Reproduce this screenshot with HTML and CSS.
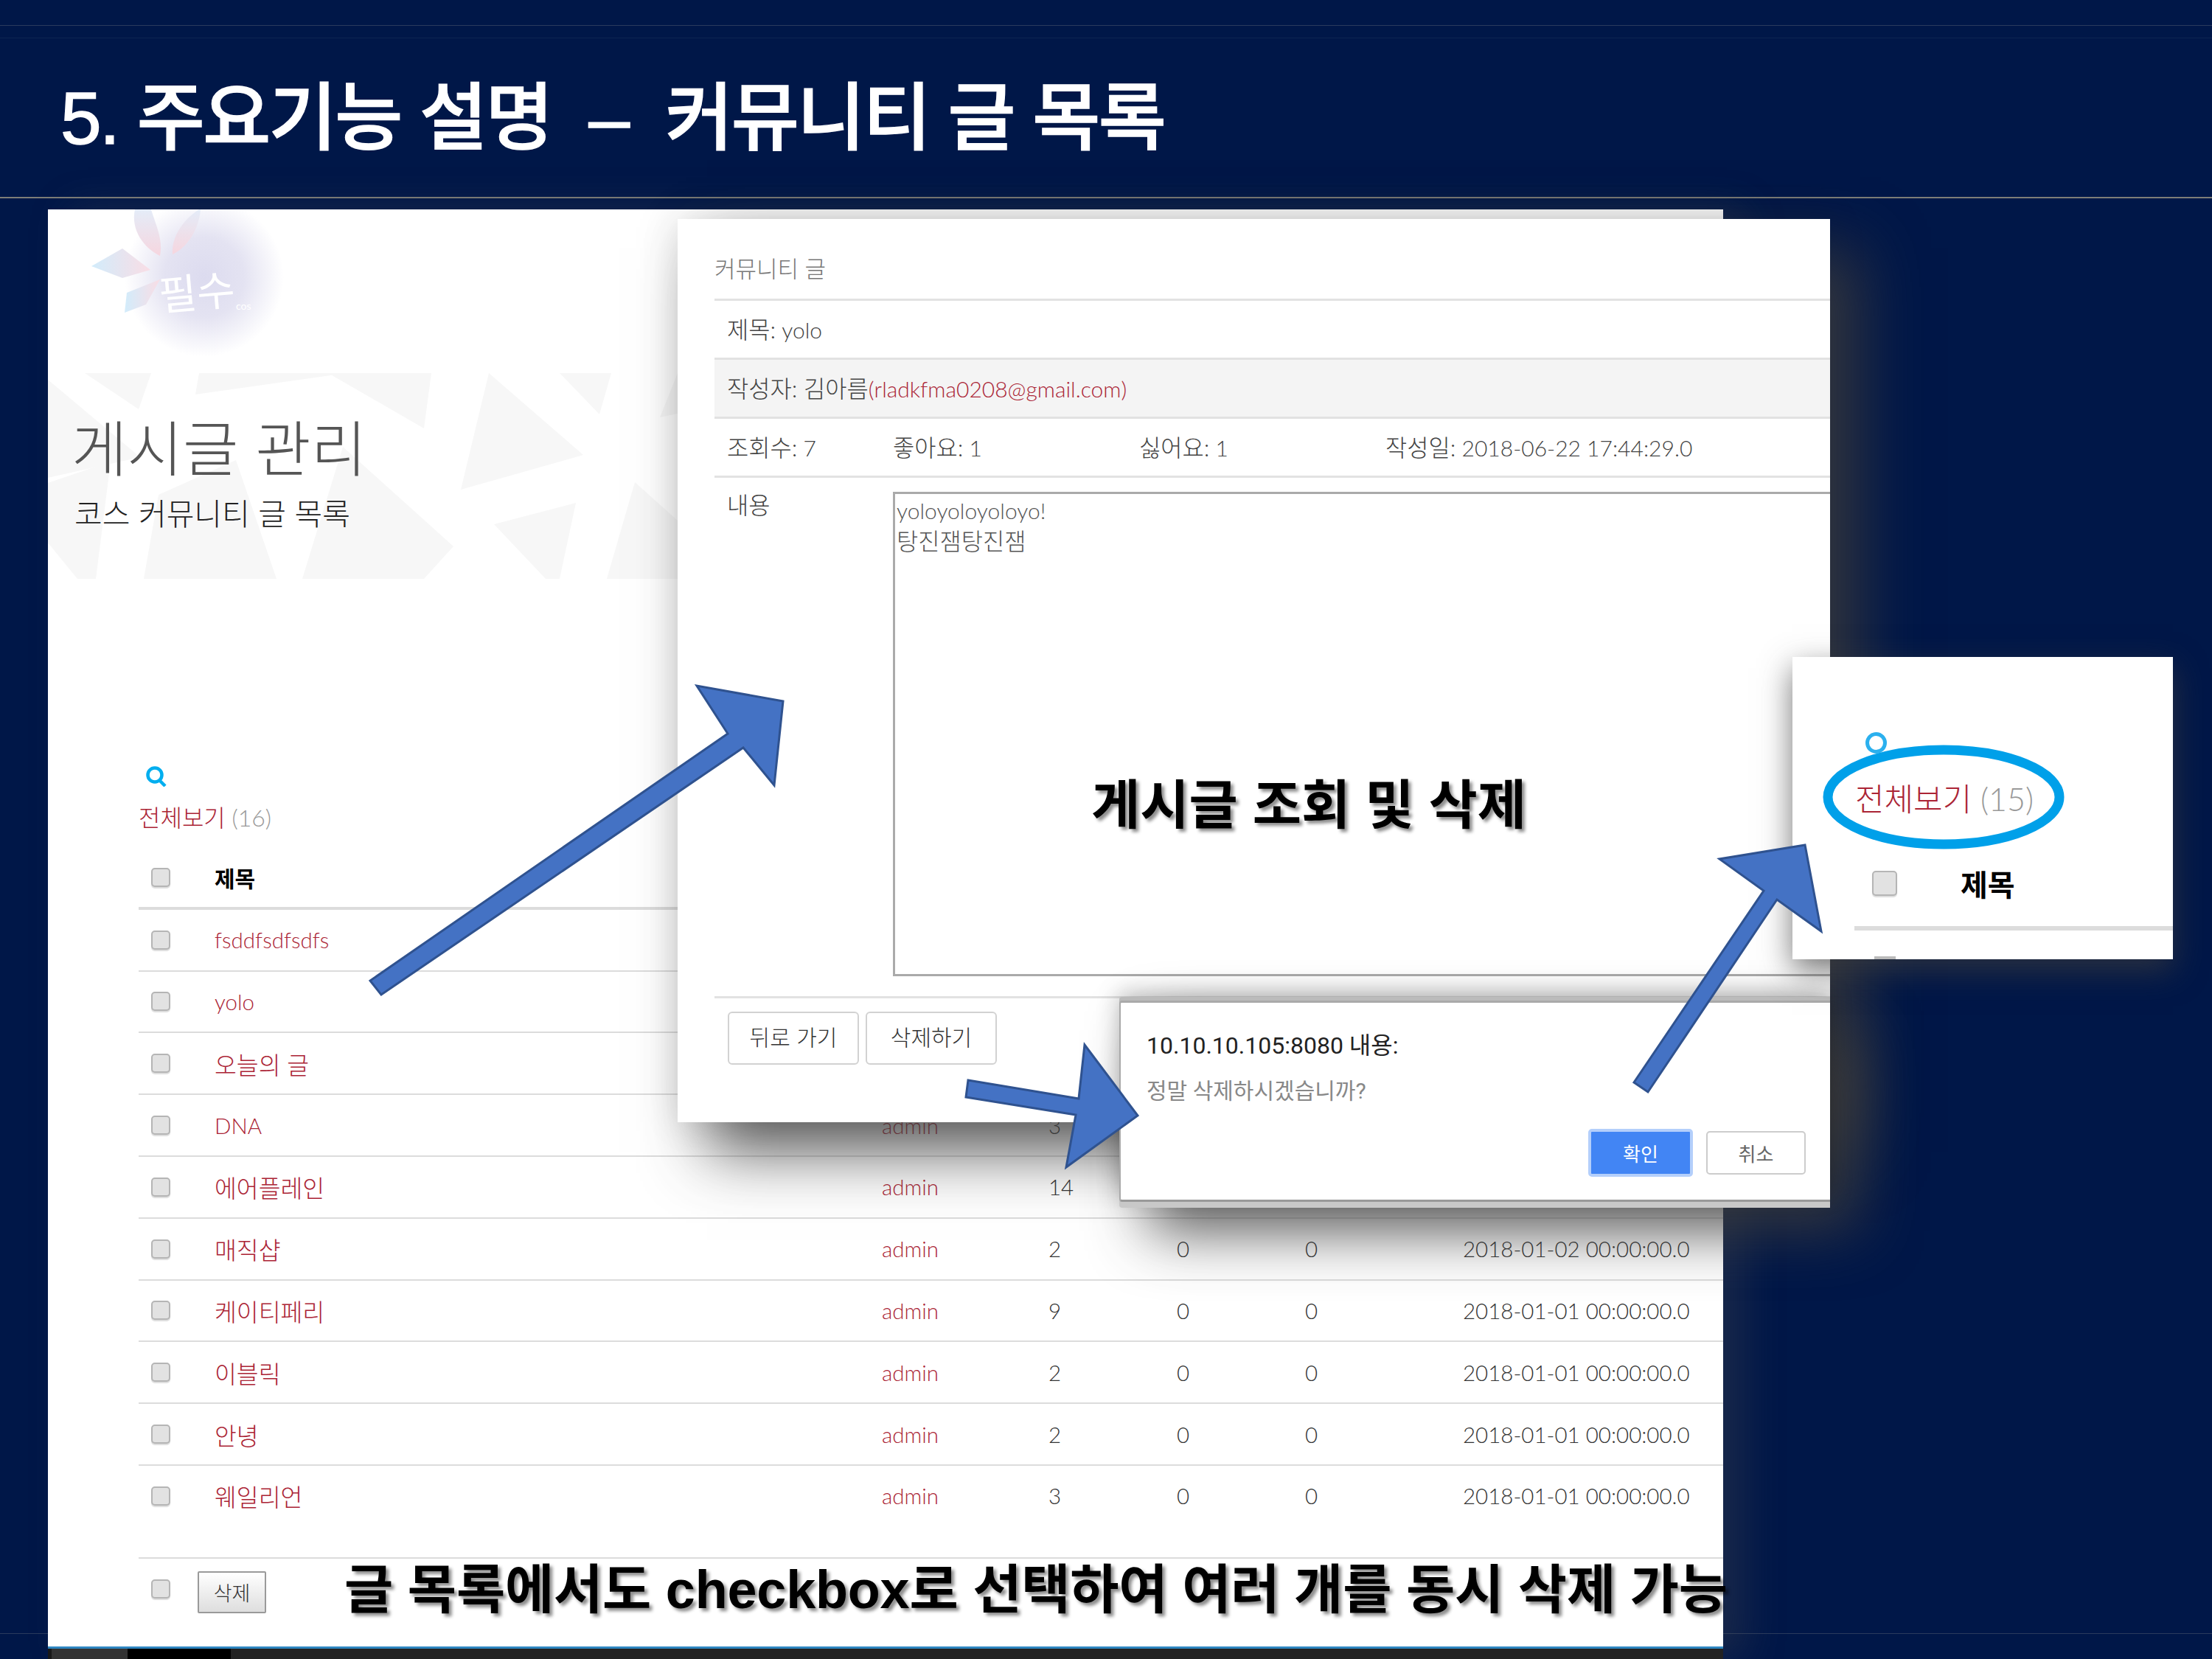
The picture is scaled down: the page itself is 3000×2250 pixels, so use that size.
FILE: index.html
```html
<!DOCTYPE html>
<html lang="ko">
<head>
<meta charset="utf-8">
<title>커뮤니티 글 목록</title>
<link rel="stylesheet" href="styles.css">
</head>
<body>
<div class="slide">
  <div class="topline-a"></div>
  <div class="topline-b"></div>
  <header class="slide-head"><h1>5. 주요기능 설명 &nbsp;–&nbsp; 커뮤니티 글 목록</h1></header>
  <div class="footline"></div>

  <section class="page">
    <div class="logo">
      <svg class="logo-art" viewBox="0 0 320 222" width="320" height="222">
        <defs>
          <radialGradient id="halo"><stop offset="0" stop-color="#dcdbef"/><stop offset=".5" stop-color="#e4e3f2"/><stop offset="1" stop-color="#ffffff"/></radialGradient>
          <linearGradient id="pet1" x1="0" y1="0" x2="0" y2="1"><stop offset="0" stop-color="#e4ecf8"/><stop offset="1" stop-color="#f6d6df"/></linearGradient>
          <linearGradient id="pet2" x1="0" y1="0" x2="1" y2="0"><stop offset="0" stop-color="#d2ecfb"/><stop offset="1" stop-color="#f9dde5"/></linearGradient>
        </defs>
        <circle cx="212" cy="92" r="108" fill="url(#halo)"/>
        <path d="M118 0C112 28 130 52 152 63C157 41 145 18 140 0Z" fill="url(#pet1)"/>
        <path d="M205 0C180 16 167 41 169 61C190 51 205 26 207 0Z" fill="url(#pet1)"/>
        <path d="M59 77L101 53L139 82L101 93Z" fill="url(#pet2)"/>
        <path d="M104 140L107 113L152 95L133 129Z" fill="url(#pet2)"/>
      </svg>
      <span class="logo-name">필수</span>
      <span class="logo-sub">cos</span>
    </div>
    <div class="hero">
      <svg class="hero-art" viewBox="0 0 854 279" width="854" height="279">
        <g fill="#f7f7f7">
          <polygon points="0,9 125,114 0,142"/>
          <polygon points="50,0 140,0 123,49"/>
          <polygon points="205,0 405,0 200,29"/>
          <polygon points="0,149 85,120 65,279 40,279 0,230"/>
          <polygon points="130,279 150,165 255,118 310,279"/>
          <polygon points="345,279 400,100 550,235 510,279"/>
          <polygon points="380,0 520,0 510,75"/>
          <polygon points="598,0 726,111 560,158"/>
          <polygon points="694,0 764,0 748,56"/>
          <polygon points="605,205 716,176 694,279 675,279"/>
          <polygon points="758,279 796,148 854,200 854,279"/>
          <polygon points="830,60 854,0 854,55"/>
        </g>
      </svg>
      <div class="hero-text">
        <h2>게시글 관리</h2>
        <p>코스 커뮤니티 글 목록</p>
      </div>
    </div>
    <div class="board">
      <svg class="search" viewBox="0 0 30 28" width="30" height="28"><circle cx="13" cy="12" r="9.5" fill="none" stroke="#00aeef" stroke-width="4.5"/><path d="M19 19l8 8" stroke="#00aeef" stroke-width="4.5" fill="none"/></svg>
      <div class="count"><a class="link">전체보기</a> <span class="num">(16)</span></div>
      <div class="row head"><span class="check"></span><b>제목</b></div>
      <div class="row"><span class="check"></span><a class="link">fsddfsdfsdfs</a></div>
      <div class="row"><span class="check"></span><a class="link">yolo</a></div>
      <div class="row"><span class="check"></span><a class="link ko">오늘의 글</a></div>
      <div class="row"><span class="check"></span><a class="link">DNA</a><a class="link">admin</a><span>3</span></div>
      <div class="row"><span class="check"></span><a class="link ko">에어플레인</a><a class="link">admin</a><span>14</span></div>
      <div class="row"><span class="check"></span><a class="link ko">매직샵</a><a class="link">admin</a><span>2</span><span>0</span><span>0</span><span>2018-01-02 00:00:00.0</span></div>
      <div class="row"><span class="check"></span><a class="link ko">케이티페리</a><a class="link">admin</a><span>9</span><span>0</span><span>0</span><span>2018-01-01 00:00:00.0</span></div>
      <div class="row"><span class="check"></span><a class="link ko">이블릭</a><a class="link">admin</a><span>2</span><span>0</span><span>0</span><span>2018-01-01 00:00:00.0</span></div>
      <div class="row"><span class="check"></span><a class="link ko">안녕</a><a class="link">admin</a><span>2</span><span>0</span><span>0</span><span>2018-01-01 00:00:00.0</span></div>
      <div class="row last"><span class="check"></span><a class="link ko">웨일리언</a><a class="link">admin</a><span>3</span><span>0</span><span>0</span><span>2018-01-01 00:00:00.0</span></div>
      <div class="foot"><span class="check"></span><button class="del">삭제</button></div>
    </div>
    <div class="taskbar"><i class="seg-a"></i><i class="seg-b"></i><i class="seg-c"></i></div>
  </section>

  <section class="modal">
    <div class="m-inner">
      <div class="m-title">커뮤니티 글</div>
      <div class="m-row"><span class="ko">제목:</span> yolo</div>
      <div class="m-row alt"><span class="ko">작성자: 김아름</span><a class="link">(rladkfma0208@gmail.com)</a></div>
      <div class="m-row stats"><span><span class="ko">조회수:</span> 7</span><span><span class="ko">좋아요:</span> 1</span><span><span class="ko">싫어요:</span> 1</span><span><span class="ko">작성일:</span> 2018-06-22 17:44:29.0</span></div>
      <div class="m-body">
        <span class="m-label ko">내용</span>
        <div class="m-area">yoloyoloyoloyo!<br><span class="ko">탕진잼탕진잼</span></div>
      </div>
      <div class="m-actions"><button class="m-btn">뒤로 가기</button><button class="m-btn">삭제하기</button></div>
    </div>
  </section>

  <section class="dialog">
    <div class="d-host">10.10.10.105:8080 내용:</div>
    <div class="d-msg">정말 삭제하시겠습니까?</div>
    <div class="d-actions"><button class="d-ok">확인</button><button class="d-no">취소</button></div>
  </section>

  <section class="zoomcard">
    <div class="z-clip">
      <div class="z-ring"></div>
      <div class="z-count"><a class="link">전체보기</a> <span class="num">(15)</span></div>
      <div class="z-head"><span class="check big"></span><b>제목</b></div>
      <span class="z-stub"></span>
    </div>
  </section>
  <svg class="ellipse" viewBox="0 0 340 150" width="340" height="150"><ellipse cx="170" cy="75" rx="157" ry="64" fill="none" stroke="#00a0e9" stroke-width="13"/></svg>

  <svg class="arrows" viewBox="0 0 3000 2250" width="3000" height="2250">
    <g fill="#4472c4" stroke="#2f528f" stroke-width="3" stroke-linejoin="miter">
      <polygon points="502,1330 517,1349 1008,1014 1050,1065 1062,951 945,930 987,995"/>
      <polygon points="1313,1465 1310,1488 1459,1512 1446,1583 1543,1513 1471,1417 1463,1490"/>
      <polygon points="2216,1468 2235,1481 2410,1220 2470,1263 2448,1146 2332,1165 2392,1208"/>
    </g>
  </svg>

  <div class="note note-a">게시글 조회 및 삭제</div>
  <div class="note note-b">글 목록에서도 checkbox로 선택하여 여러 개를 동시 삭제 가능</div>
</div>
</body>
</html>
```
FILE: styles.css
```css
* { box-sizing: border-box; }
html, body { margin: 0; padding: 0; }
body { width: 3000px; height: 2250px; overflow: hidden; }
h1, h2, p { margin: 0; }
button { font: inherit; }

.slide {
  position: relative;
  width: 3000px;
  height: 2250px;
  overflow: hidden;
  background: #001748;
  font-family: Lato, "Noto Sans CJK KR", sans-serif;
  font-weight: 300;
  color: #333;
}
.topline-a, .topline-b, .footline { position: absolute; left: 0; width: 3000px; height: 1px; }
.topline-a { top: 34px; background: #2a3a5c; }
.topline-b { top: 51px; background: #0e2452; }
.footline { top: 2215px; background: #2a3a5c; }

.slide-head {
  height: 269px;
  padding: 90px 0 0 82px;
  border-bottom: 2px solid #7d7d78;
}
.slide-head h1 {
  font-family: "Liberation Sans", "Noto Sans CJK KR", sans-serif;
  font-size: 100px;
  line-height: 140px;
  font-weight: 500;
  letter-spacing: -2.5px;
  white-space: nowrap;
  color: #fff;
  -webkit-text-stroke: 1.5px #fff;
}

/* free-canvas windows */
.page {
  position: absolute;
  left: 65px;
  top: 284px;
  width: 2272px;
  height: 1966px;
  background: #fff;
  overflow: hidden;
  display: flex;
  flex-direction: column;
  box-shadow: 30px 0 50px rgba(80, 80, 80, .3);
}
.logo { position: relative; height: 222px; flex: none; }
.logo-art { display: block; }
.logo-name {
  position: absolute;
  left: 150px;
  top: 68px;
  font-family: "Noto Sans CJK KR", sans-serif;
  font-size: 56px;
  font-weight: 400;
  color: #fff;
  transform: rotate(-5deg);
}
.logo-sub { position: absolute; left: 255px; top: 122px; font-size: 14px; color: #fff; font-weight: 400; }

.hero { position: relative; height: 279px; flex: none; }
.hero-art { display: block; position: absolute; left: 0; top: 0; }
.hero-text { position: relative; padding: 43px 0 0 32px; }
.hero-text h2 {
  font-family: "Noto Sans CJK KR", sans-serif;
  font-size: 82px;
  line-height: 110px;
  font-weight: 300;
  color: #555;
  white-space: nowrap;
}
.hero-text p {
  font-family: "Noto Sans CJK KR", sans-serif;
  padding-left: 4px;
  margin-top: 7px;
  font-size: 41px;
  line-height: 56px;
  font-weight: 300;
  color: #222;
}

.board { padding: 254px 0 0 123px; flex: 1; position: relative; min-width: 0; font-size: 29.5px; }
.search { display: block; margin-left: 9px; }
.count { margin-top: 20px; height: 63px; line-height: 44px; font-size: 32px; }
.link { color: #ab2435; text-decoration: none; }
.num { color: #999; }
.ko { font-size: 1.1em; }
.modal .ko { font-size: 1.06em; }

.row {
  display: grid;
  grid-template-columns: 103px 905px 226px 174px 174px 214px 1fr;
  align-items: center;
  height: 83.8px;
  border-bottom: 2px solid #dcdcdc;
  white-space: nowrap;
  color: #333;
}
.row.head { border-bottom-width: 4px; color: #000; font-size: 30px; }
.row.head b { font-family: "Noto Sans CJK KR", sans-serif; font-weight: 700; }
.row.last { height: 126px; padding-bottom: 42px; }
.check {
  display: block;
  width: 26px;
  height: 26px;
  margin-left: 17px;
  background: #e2e2e2;
  border: 2px solid #b5b5b5;
  border-radius: 5px;
  box-shadow: 0 2px 1px #ddd;
}
.foot { display: flex; align-items: flex-start; padding-top: 17px; }
.foot .check { margin-top: 11px; }
.del {
  margin-left: 37px;
  width: 93px;
  height: 57px;
  background: linear-gradient(#fff, #dedede);
  border: 2px solid #9a9a9a;
  border-radius: 2px;
  font-family: "Noto Sans CJK KR", sans-serif;
  font-size: 27px;
  font-weight: 300;
  color: #333;
}

.taskbar {
  position: absolute;
  left: 0;
  right: 0;
  bottom: 0;
  height: 17px;
  border-top: 3px solid #2e86c1;
  background: #222;
  display: flex;
}
.taskbar i { display: block; height: 100%; }
.seg-a { width: 5px; background: #181818; }
.seg-b { width: 103px; background: #333; }
.seg-c { width: 140px; background: #000; }

.modal {
  position: absolute;
  left: 919px;
  top: 297px;
  width: 1563px;
  height: 1225px;
  background: #fff;
  font-size: 30px;
  box-shadow: 40px 40px 80px rgba(60, 60, 60, .85), 0 0 50px rgba(0, 0, 0, .1);
}
.m-inner { height: 100%; padding-left: 50px; overflow: hidden; }
.m-title {
  height: 111px;
  padding: 47px 0 0 0;
  line-height: 40px;
  font-size: 31px;
  border-bottom: 3px solid #e2e2e2;
  color: #777;
}
.m-row {
  height: 80px;
  padding-left: 17px;
  line-height: 78px;
  border-bottom: 3px solid #e2e2e2;
  color: #444;
  white-space: nowrap;
}
.m-row.alt { background: #f4f4f4; height: 80px; }
.m-row.stats { display: grid; grid-template-columns: 225px 334px 334px 1fr; }
.m-body { display: grid; grid-template-columns: 225px 1fr; height: 706px; padding-left: 17px; border-bottom: 3px solid #e2e2e2; }
.m-label { padding-top: 17px; line-height: 40px; color: #444; }
.m-area {
  margin: 19px -20px 0 0;
  height: 657px;
  padding: 1px 2px;
  border: 3px solid #aaa;
  line-height: 42px;
  color: #555;
}
.m-actions { display: flex; gap: 9px; padding: 18px 0 0 18px; }
.m-btn {
  width: 178px;
  height: 72px;
  padding: 0 0 6px;
  background: #fff;
  border: 2px solid #d2d2d2;
  border-radius: 6px;
  font-family: "Noto Sans CJK KR", sans-serif;
  font-weight: 300;
  font-size: 30px;
  color: #333;
}

.dialog {
  position: absolute;
  left: 1518px;
  top: 1357px;
  width: 964px;
  height: 273px;
  padding: 37px 0 0 35px;
  background: #fff;
  border-top: 3px solid #aaa;
  border-left: 2px solid #aaa;
  border-bottom: 3px solid #999;
  border-radius: 4px 0 0 4px;
  display: flex;
  flex-direction: column;
  color: #222;
  box-shadow: 0 8px 0 #c8c8c8, 0 -5px 0 #bbb, 0 -10px 30px rgba(0, 0, 0, .25), 40px 40px 80px rgba(60, 60, 60, .85);
}
.d-host { font-family: Roboto, "Noto Sans CJK KR", sans-serif; font-weight: 400; font-size: 32px; line-height: 42px; white-space: nowrap; }
.d-msg { font-family: Roboto, "Noto Sans CJK KR", sans-serif; font-weight: 400; font-size: 30px; line-height: 40px; margin-top: 21px; color: #888; }
.d-actions { display: flex; align-items: center; gap: 18px; margin-top: 31px; padding-left: 599px; }
.d-ok {
  width: 142px;
  height: 65px;
  background: #4285f4;
  border: 4px solid #b4cffb;
  border-radius: 5px;
  color: #fff;
  font-family: "Noto Sans CJK KR", sans-serif;
  font-weight: 400;
  font-size: 26px;
  padding: 0;
}
.d-no {
  width: 135px;
  height: 59px;
  background: #fff;
  border: 2px solid #ccc;
  border-radius: 5px;
  color: #666;
  font-family: "Noto Sans CJK KR", sans-serif;
  font-weight: 400;
  font-size: 26px;
  padding: 0;
}

.zoomcard {
  position: absolute;
  left: 2431px;
  top: 891px;
  width: 516px;
  height: 410px;
  background: #fff;
  box-shadow: 0 15px 40px rgba(60, 60, 60, .7);
}
.z-clip { height: 100%; overflow: hidden; }
.z-ring {
  width: 29px;
  height: 29px;
  margin: 102px 0 0 99px;
  border: 5px solid #2bb0ee;
  border-radius: 50%;
}
.z-count { margin: 32px 0 0 85px; font-size: 43px; line-height: 60px; white-space: nowrap; font-weight: 300; }
.z-head { display: flex; align-items: center; margin: 30px 0 0 84px; height: 118px; padding-bottom: 5px; font-family: "Noto Sans CJK KR", sans-serif; font-size: 40px; color: #000; border-bottom: 6px solid #dcdcdc; }
.z-head b { margin-left: 86px; font-weight: 700; }
.check.big { width: 34px; height: 34px; margin-left: 24px; }
.z-stub { display: block; width: 29px; height: 4px; margin: 35px 0 0 111px; background: #bbb; }

.ellipse { position: absolute; left: 2466px; top: 1006px; }
.arrows { position: absolute; left: 0; top: 0; pointer-events: none; }

.note {
  position: absolute;
  font-family: "Liberation Sans", "Noto Sans CJK KR", sans-serif;
  font-weight: 700;
  color: #000;
  white-space: nowrap;
  text-shadow: 4px 4px 4px rgba(0, 0, 0, .45);
}
.note-a { left: 1480px; top: 1039px; font-size: 72px; line-height: 106px; }
.note-b { left: 467px; top: 2103px; font-size: 72px; line-height: 106px; letter-spacing: -.2px; }
```
